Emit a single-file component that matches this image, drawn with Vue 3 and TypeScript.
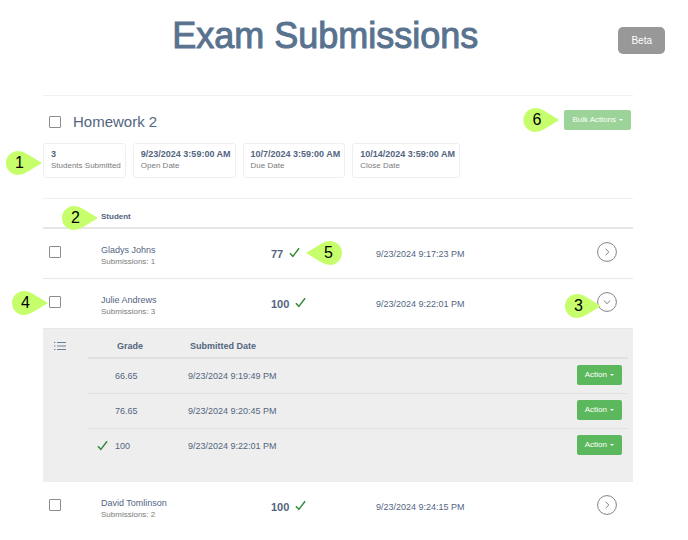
<script setup lang="ts">
import { defineComponent, h, ref } from 'vue'

interface Attempt {
  grade: string
  date: string
  counted?: boolean
}
interface Student {
  id: number
  name: string
  submissions: number
  score: number
  date: string
  selectMarker?: string
  scoreMarker?: string
  toggleMarker?: string
  attempts: Attempt[]
}

const summary = [
  { value: '3', label: 'Students Submitted' },
  { value: '9/23/2024 3:59:00 AM', label: 'Open Date' },
  { value: '10/7/2024 3:59:00 AM', label: 'Due Date' },
  { value: '10/14/2024 3:59:00 AM', label: 'Close Date' },
]

const students: Student[] = [
  { id: 1, name: 'Gladys Johns', submissions: 1, score: 77, date: '9/23/2024 9:17:23 PM', scoreMarker: '5', attempts: [] },
  {
    id: 2,
    name: 'Julie Andrews',
    submissions: 3,
    score: 100,
    date: '9/23/2024 9:22:01 PM',
    selectMarker: '4',
    toggleMarker: '3',
    attempts: [
      { grade: '66.65', date: '9/23/2024 9:19:49 PM' },
      { grade: '76.65', date: '9/23/2024 9:20:45 PM' },
      { grade: '100', date: '9/23/2024 9:22:01 PM', counted: true },
    ],
  },
  { id: 3, name: 'David Tomlinson', submissions: 2, score: 100, date: '9/23/2024 9:24:15 PM', attempts: [] },
]

const openId = ref<number | null>(2)
function toggle(s: Student) {
  openId.value = openId.value === s.id ? null : s.id
}

const CheckIcon = defineComponent({
  render: () =>
    h('svg', { viewBox: '0 0 12 12', 'aria-hidden': 'true' }, [
      h('path', {
        d: 'M1 6.8 L4.2 10.2 L11 1.4',
        fill: 'none',
        stroke: '#37893a',
        'stroke-width': '1.6',
      }),
    ]),
})
</script>

<template>
  <main class="page">
    <header class="top">
      <h1>Exam Submissions</h1>
      <button type="button" class="beta">Beta</button>
    </header>

    <section class="panel">
      <div class="assignment">
        <label class="assignment-name">
          <input type="checkbox" />
          <span>Homework 2</span>
        </label>
        <div class="bulk">
          <button type="button" class="btn faded">Bulk Actions <i class="caret"></i></button>
          <span class="marker marker-bulk">6</span>
        </div>
      </div>

      <div class="cards">
        <span class="marker marker-cards">1</span>
        <div v-for="c in summary" :key="c.label" class="card">
          <strong>{{ c.value }}</strong>
          <span>{{ c.label }}</span>
        </div>
      </div>

      <table class="students">
        <colgroup>
          <col class="c-select" />
          <col class="c-name" />
          <col class="c-score" />
          <col />
          <col class="c-toggle" />
        </colgroup>
        <thead>
          <tr>
            <td></td>
            <th scope="col">Student<span class="marker marker-student">2</span></th>
            <td></td>
            <td></td>
            <td></td>
          </tr>
        </thead>
        <tbody>
          <template v-for="s in students" :key="s.id">
            <tr class="student">
              <td class="select">
                <input type="checkbox" :aria-label="'Select ' + s.name" />
                <span v-if="s.selectMarker" class="marker marker-select">{{ s.selectMarker }}</span>
              </td>
              <td class="who">
                <div class="name">{{ s.name }}</div>
                <div class="count">Submissions: {{ s.submissions }}</div>
              </td>
              <td class="score">
                <div class="score-line"><b>{{ s.score }}</b><CheckIcon class="check" /></div>
                <span v-if="s.scoreMarker" class="marker flipped marker-score">{{ s.scoreMarker }}</span>
              </td>
              <td>{{ s.date }}</td>
              <td class="toggle">
                <button
                  type="button"
                  class="round"
                  :aria-label="'Submissions of ' + s.name"
                  :aria-expanded="openId === s.id"
                  @click="toggle(s)"
                >
                  <svg viewBox="0 0 20 20" aria-hidden="true">
                    <circle cx="10" cy="10" r="9.4" />
                    <path v-if="openId === s.id" d="M6.8 8.6 L10 11.6 L13.2 8.6" />
                    <path v-else d="M8.6 6.8 L11.8 10 L8.6 13.2" />
                  </svg>
                </button>
                <span v-if="s.toggleMarker" class="marker marker-toggle">{{ s.toggleMarker }}</span>
              </td>
            </tr>
            <tr v-if="openId === s.id" class="detail">
              <td colspan="5">
                <div class="detail-body">
                  <svg class="list-icon" viewBox="0 0 12 10" aria-hidden="true">
                    <path d="M3 1.5 H12 M3 5 H12 M3 8.5 H12 M0 1.5 H1.4 M0 5 H1.4 M0 8.5 H1.4" />
                  </svg>
                  <table class="attempts">
                    <colgroup>
                      <col class="a-mark" />
                      <col class="a-grade" />
                      <col />
                      <col class="a-action" />
                    </colgroup>
                    <thead>
                      <tr>
                        <td></td>
                        <th scope="col">Grade</th>
                        <th scope="col">Submitted Date</th>
                        <td></td>
                      </tr>
                    </thead>
                    <tbody>
                      <tr v-for="a in s.attempts" :key="a.date">
                        <td class="counted"><CheckIcon v-if="a.counted" class="check" /></td>
                        <td>{{ a.grade }}</td>
                        <td>{{ a.date }}</td>
                        <td class="action">
                          <button type="button" class="btn">Action <i class="caret"></i></button>
                        </td>
                      </tr>
                    </tbody>
                  </table>
                </div>
              </td>
            </tr>
          </template>
        </tbody>
      </table>
    </section>
  </main>
</template>

<style>
body {
  background: #fff;
}
</style>

<style scoped>
.page {
  font-family: "Liberation Sans", Arial, Helvetica, sans-serif;
  font-size: 9px;
  line-height: 12px;
  color: #53657f;
}
.top {
  display: flex;
  align-items: flex-start;
  padding: 15px 23px 0 32px;
  height: 80px;
}
h1 {
  flex: 1;
  margin: 0;
  text-align: center;
  font-size: 36px;
  line-height: 42px;
  font-weight: 400;
  color: #58728f;
  -webkit-text-stroke: 1px #58728f;
}
button {
  font-family: inherit;
  border: 0;
  cursor: pointer;
}
.beta {
  margin-top: 12px;
  padding: 0 13px;
  height: 27px;
  border-radius: 5px;
  background: #989898;
  color: #fff;
  font-size: 10px;
  line-height: 27px;
}
.panel {
  margin: 0 55px 0 43px;
  border-top: 1px solid #f0f0f0;
}
.assignment {
  display: flex;
  justify-content: space-between;
  padding: 14px 2px 0 6px;
}
.assignment-name {
  display: flex;
  align-items: center;
  gap: 12px;
  height: 24px;
  font-size: 15px;
  line-height: 24px;
}
input[type="checkbox"] {
  appearance: none;
  display: block;
  box-sizing: border-box;
  width: 12px;
  height: 12px;
  margin: 0;
  border: 1px solid #8c8c8c;
  border-radius: 1px;
  background: #fff;
}
input[type="checkbox"]:checked {
  background: #5cb85c;
}
.bulk {
  position: relative;
  height: 20px;
}
.btn {
  display: inline-flex;
  align-items: center;
  gap: 3px;
  height: 20px;
  padding: 0 8px;
  border-radius: 2px;
  background: #5cb85c;
  color: #fff;
  font-size: 8px;
  line-height: 20px;
  white-space: nowrap;
}
.btn.faded {
  background: #9bd399;
}
.caret {
  border: 2px solid transparent;
  border-top-color: #fff;
  border-bottom: 0;
}
.cards {
  position: relative;
  display: flex;
  gap: 7px;
  margin-top: 9px;
  padding-bottom: 20px;
  border-bottom: 1px solid #f0f0f0;
}
.card {
  display: flex;
  flex-direction: column;
  padding: 4px 4px 5px 7px;
  border: 1px solid #efefef;
  border-radius: 3px;
}
.card span {
  font-size: 8px;
  color: #7b7b7b;
}
table {
  width: 100%;
  border-collapse: separate;
  border-spacing: 0;
  table-layout: fixed;
}
th,
td {
  padding: 0;
  text-align: left;
}
.c-select {
  width: 58px;
}
.c-name {
  width: 170px;
}
.c-score {
  width: 105px;
}
.c-toggle {
  width: 80px;
}
.students > thead > tr > * {
  position: relative;
  height: 30px;
  padding-top: 7px;
  box-sizing: border-box;
  border-bottom: 2px solid #e6e6e6;
  font-size: 8px;
}
.student > td {
  position: relative;
  box-sizing: border-box;
  height: 50px;
  border-bottom: 1px solid #e8e8e8;
}
.student:last-child > td {
  border-bottom-color: transparent;
}
.student > .select {
  padding: 0 0 3px 6px;
}
.student > .who {
  padding-top: 4px;
}
.count {
  font-size: 8px;
  color: #7b7b7b;
}
.score-line {
  display: flex;
  align-items: center;
  gap: 6px;
  font-size: 11px;
}
.check {
  display: block;
  width: 11px;
  height: 11px;
  padding-bottom: 2px;
}
.student > .toggle {
  padding: 0 16px 3px 0;
}
.round {
  display: block;
  width: 20px;
  height: 20px;
  margin-left: auto;
  padding: 0;
  border-radius: 50%;
  background: #fff;
}
.round svg {
  display: block;
  fill: none;
  stroke: #828282;
}
.detail-body {
  display: flex;
  align-items: flex-start;
  padding: 0 5px 18px 11px;
  background: #eee;
}
.list-icon {
  flex: none;
  width: 12px;
  height: 10px;
  margin: 12px 22px 0 0;
  stroke: #6b7f99;
}
.a-mark {
  width: 27px;
}
.a-grade {
  width: 73px;
}
.a-action {
  width: 80px;
}
.attempts th,
.attempts thead td {
  box-sizing: border-box;
  height: 30px;
  padding: 6px 0 0 2px;
  border-bottom: 2px solid #e0e0e0;
}
.attempts tbody td {
  box-sizing: border-box;
  height: 35px;
  border-bottom: 1px solid #e0e0e0;
}
.attempts tbody tr:last-child td {
  border-bottom-color: transparent;
}
.attempts .counted {
  padding-left: 9px;
}
.attempts .action {
  padding: 0 6px 3px 0;
  text-align: right;
}
.action .btn {
  vertical-align: middle;
}

/* Numbered pointers that lie over the page */
.marker {
  position: absolute;
  z-index: 1;
  box-sizing: border-box;
  width: 36px;
  height: 24px;
  padding-left: 9px;
  background: #c6ff6b;
  clip-path: path("M36 12 L22 3.4 Q17 0 12 0 A12 12 0 0 0 12 24 Q17 24 22 20.6 Z");
  color: #000;
  font-size: 16px;
  font-weight: 400;
  line-height: 24px;
}
.marker.flipped {
  padding-left: 18px;
  clip-path: path("M0 12 L14 3.4 Q19 0 24 0 A12 12 0 0 1 24 24 Q19 24 14 20.6 Z");
}
.marker-bulk {
  top: -2px;
  right: calc(100% + 5px);
}
.marker-cards {
  top: 8px;
  left: -37px;
}
.marker-student {
  top: 7px;
  left: -39px;
}
.marker-select {
  top: 12px;
  left: -31px;
}
.marker-score {
  top: 12px;
  left: 35px;
}
.marker-toggle {
  top: 15px;
  right: 32px;
}
</style>
